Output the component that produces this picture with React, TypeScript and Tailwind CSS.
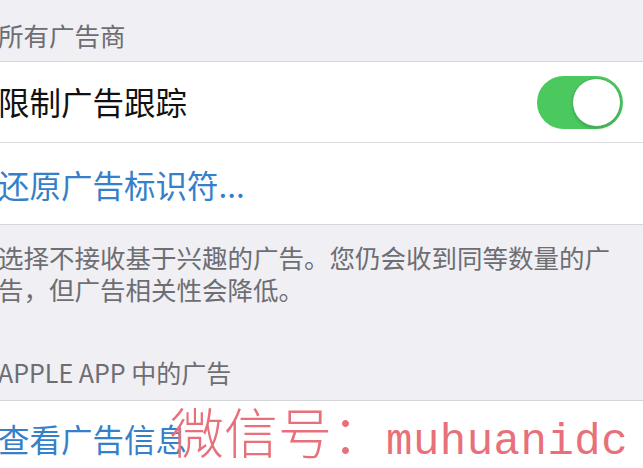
const cjk = "font-['Noto_Sans_CJK_SC','Noto_Sans',sans-serif]";

function Toggle() {
  return (
    <div className="relative h-[53px] w-[86px] rounded-full bg-[#4bc95f]">
      <div className="absolute right-[2px] top-[2px] h-[49px] w-[49px] rounded-full border border-[#3fae52] bg-white shadow-[0_2px_3px_rgba(0,0,0,0.15)]" />
    </div>
  );
}

export default function App() {
  return (
    <div className={`relative h-[468px] w-[643px] overflow-hidden bg-[#efeff4] ${cjk}`}>
      <div className="h-[61px] pt-[20px]">
        <p className="-ml-[2px] text-[25.5px] leading-[30px] text-[#6d6d72]">所有广告商</p>
      </div>
      <div className="border-y border-[#d6d6da] bg-white">
        <div className="flex h-[80px] items-center justify-between pr-[20px]">
          <span className="-ml-[2px] text-[31.5px] text-[#111]">限制广告跟踪</span>
          <Toggle />
        </div>
        <div className="border-t border-[#dcdce0]" />
        <div className="flex h-[81px] items-center pt-[2px]">
          <span className="-ml-[2px] text-[31.5px] text-[#3580c9]">还原广告标识符...</span>
        </div>
      </div>
      <div className="pt-[16px]">
        <p className="-ml-[2px] w-[622px] text-[25.5px] leading-[32px] text-[#6d6d72]">
          选择不接收基于兴趣的广告。您仍会收到同等数量的广告，但广告相关性会降低。
        </p>
      </div>
      <div className="pt-[52px] pb-[13px]">
        <p className="-ml-[2px] text-[25px] leading-[30px] text-[#6d6d72]">APPLE APP 中的广告</p>
      </div>
      <div className="border-t border-[#d6d6da] bg-white">
        <div className="flex h-[76px] items-center">
          <span className="-ml-[2px] text-[31.5px] text-[#3580c9]">查看广告信息</span>
        </div>
      </div>
      <div className="pointer-events-none absolute left-[170px] top-[398px] flex items-baseline whitespace-nowrap text-[#e8707a]">
        <span className="text-[54px] font-light leading-[66px]">微信号：</span>
        <span className="font-['Liberation_Mono',monospace] text-[44px] leading-[66px] tracking-[0.5px]">muhuanidc</span>
      </div>
    </div>
  );
}
